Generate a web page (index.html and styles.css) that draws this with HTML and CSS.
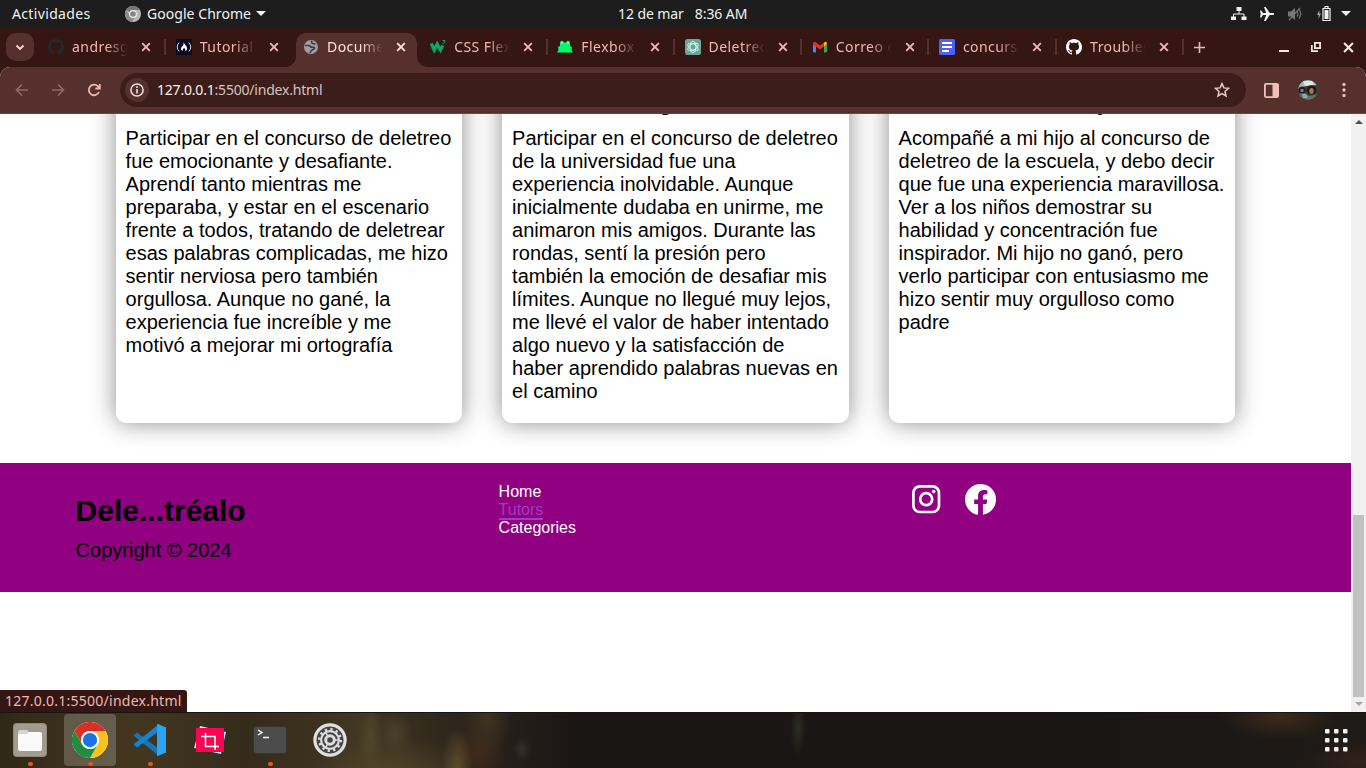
FILE: index.html
```html
<!DOCTYPE html>
<html lang="es">
<head>
<meta charset="utf-8">
<title>Document</title>
<link rel="stylesheet" href="styles.css">
</head>
<body>
<svg class="defs" width="0" height="0">
  <symbol id="x" viewBox="0 0 10 10"><path d="M1.200 1.200l7.600 7.600M8.800 1.200L1.200 8.800" stroke="currentColor" stroke-width="1.900" fill="none"/></symbol>
  <symbol id="gh" viewBox="0 0 16 16"><path fill="currentColor" d="M8 0C3.58 0 0 3.58 0 8c0 3.54 2.29 6.53 5.47 7.59.4.07.55-.17.55-.38 0-.19-.01-.82-.01-1.49-2.01.37-2.53-.49-2.69-.94-.09-.23-.48-.94-.82-1.13-.28-.15-.68-.52-.01-.53.63-.01 1.08.58 1.23.82.72 1.21 1.87.87 2.33.66.07-.52.28-.87.51-1.07-1.78-.2-3.64-.89-3.64-3.95 0-.87.31-1.59.82-2.15-.08-.2-.36-1.02.08-2.12 0 0 .67-.21 2.2.82.64-.18 1.32-.27 2-.27s1.36.09 2 .27c1.53-1.04 2.2-.82 2.2-.82.44 1.1.16 1.92.08 2.12.51.56.82 1.27.82 2.15 0 3.07-1.87 3.75-3.65 3.95.29.25.54.73.54 1.48 0 1.07-.01 1.93-.01 2.2 0 .21.15.46.55.38A8.01 8.01 0 0 0 16 8c0-4.42-3.58-8-8-8z"/></symbol>
</svg>

<header class="topbar">
  <span class="activities">Actividades</span>
  <span class="appmenu">
    <svg width="16" height="16" viewBox="0 0 16 16"><circle cx="8" cy="8" r="8" fill="#b9b9b9"/><path d="M8 8L1 4A8 8 0 0 1 15 4H8z" fill="#777"/><path d="M1 4A8 8 0 0 0 7 16L11 9.500L5 10z" fill="#8c8c8c"/><circle cx="8" cy="8" r="4" fill="#eee"/><circle cx="8" cy="8" r="2.800" fill="#858585"/></svg>
    <span class="appname">Google Chrome</span>
    <i class="caret"></i>
  </span>
  <span class="clock"><span>12 de mar</span><span>8:36 AM</span></span>
  <span class="tray">
    <svg width="16" height="14" viewBox="0 0 16 14"><path d="M5.500 0h5v4h-5zM0 9.500h5V13H0zM10.500 9.500h5V13h-5z" fill="#f2f2f2"/><path d="M8 4v3M2.500 10V7h10.500v3" stroke="#f2f2f2" fill="none"/></svg>
    <svg width="16" height="16" viewBox="0 0 16 16"><path d="M1 4.500h1.300L4 7h3.200L5 1h1.700l4 6h3c2 0 2 2 0 2h-3l-4 6H5l2.200-6H4l-1.700 2.500H1L1.700 8z" fill="#f2f2f2"/></svg>
    <svg width="16" height="16" viewBox="0 0 16 16"><path d="M1 5.500h3L8 2v12l-4-3.500H1z" fill="#777"/><path d="M10 5.500q2 2.500 0 5M12 3.500q3.500 4.500 0 9M2 14L13 2" stroke="#777" fill="none" stroke-width="1.200"/></svg>
    <svg width="16" height="16" viewBox="0 0 16 16"><path d="M3.500 4L1 9h1.800L2.500 13 5 7.500H3.200z" fill="#aaa"/><path d="M7 2.500h7v12H7zM9 .500h3v2H9z" fill="none" stroke="#f2f2f2" stroke-width="1.200"/><path d="M8.500 4h4v9h-4z" fill="#f2f2f2"/></svg>
    <i class="caret"></i>
  </span>
</header>

<nav class="tabs">
  <button class="search"><svg width="10" height="7" viewBox="0 0 10 7"><path d="M1.500 1.500L5 5l3.500-3.500" stroke="#ffdad5" stroke-width="1.800" fill="none"/></svg></button>
  <div class="tab sep"><svg class="fav dark" viewBox="0 0 16 16"><use href="#gh"/></svg><span class="name">andresg</span><svg class="close"><use href="#x"/></svg></div>
  <div class="tab"><svg class="fav" viewBox="0 0 16 16"><path fill="#0a0a23" d="M0 0h16v16H0z"/><path d="M3.200 3.500q-4 4.500 0 9M12.800 3.500q4 4.500 0 9" stroke="#ddd" fill="none"/><path d="M7.500 3c1 2.500 4 4.500 3.500 7-.3 1.500-1 2-1.700 2 .5-2-.5-2-1.300-3.500-.5 1.500-1.500 1.500-1.300 3.500C4.500 11 4.500 9 6 7.500 7 6.500 8 5 7.500 3z" fill="#fff"/></svg><span class="name">Tutorial</span><svg class="close"><use href="#x"/></svg></div>
  <div class="tab active"><svg class="fav" viewBox="0 0 16 16"><circle cx="8" cy="8" r="7" fill="#9aa0a6"/><path d="M8.800 1.800Q8 4 10 4.500l2.500.5M2 6.500h3.500q2.500 0 2.500 1.800H11q1.500 1-1 2.200Q8 11 7 14" stroke="#56302d" stroke-width="1.600" fill="none"/></svg><span class="name">Docume</span><svg class="close"><use href="#x"/></svg></div>
  <div class="tab sep"><svg class="fav" viewBox="0 0 16 16"><path d="M1.200 4.500L4.200 11l3-6 3.300 6 2.300-4.500" stroke="#04aa6d" stroke-width="3.200" fill="none"/><path d="M12.500 1.500H15l-1 1.300q2 1-1.500 2" stroke="#04aa6d" fill="none"/></svg><span class="name">CSS Flex</span><svg class="close"><use href="#x"/></svg></div>
  <div class="tab sep"><svg class="fav" viewBox="0 0 16 16"><path d="M3 4a2 2 0 0 1 4-.5h2a2 2 0 0 1 4 .5v3l2 1-.5 3 1.500 2.500H0L1.500 11 1 8l2-1z" fill="#00f86d"/><circle cx="5" cy="4" r=".8" fill="#fff"/><circle cx="11" cy="4" r=".8" fill="#fff"/></svg><span class="name">Flexbox</span><svg class="close"><use href="#x"/></svg></div>
  <div class="tab sep"><svg class="fav" viewBox="0 0 16 16"><rect width="16" height="16" rx="2.500" fill="#65a899"/><g fill="none" stroke="#e6f5f0" stroke-width=".9"><ellipse cx="8" cy="8" rx="3" ry="5.700"/><ellipse cx="8" cy="8" rx="3" ry="5.700" transform="rotate(60 8 8)"/><ellipse cx="8" cy="8" rx="3" ry="5.700" transform="rotate(120 8 8)"/></g></svg><span class="name">Deletreo</span><svg class="close"><use href="#x"/></svg></div>
  <div class="tab sep"><svg class="fav" viewBox="0 0 16 16"><path d="M1 5l3 2v6.500H2q-1 0-1-1z" fill="#4285f4"/><path d="M12 7l3-2v7.500q0 1-1 1h-2z" fill="#34a853"/><path d="M12 3.500q3-2 3 1.500l-3 2.500z" fill="#fbbc04"/><path d="M1 5q0-3.500 3-1.500l4 3 4-3V7.500l-4 3-4-3L1 5z" fill="#ea2b1f"/></svg><span class="name">Correo de</span><svg class="close"><use href="#x"/></svg></div>
  <div class="tab sep"><svg class="fav" viewBox="0 0 16 16"><rect width="16" height="16" rx="1.500" fill="#4e5ffb"/><path d="M3 4h10M3 8h10M3 12h7" stroke="#fff" stroke-width="2"/></svg><span class="name">concurso</span><svg class="close"><use href="#x"/></svg></div>
  <div class="tab sep"><svg class="fav light" viewBox="0 0 16 16"><use href="#gh"/></svg><span class="name">Troubles</span><svg class="close"><use href="#x"/></svg></div>
  <svg class="plus" width="11" height="11" viewBox="0 0 11 11"><path d="M5.500 0v11M0 5.500h11" stroke="#f0b8b2" stroke-width="1.600"/></svg>
  <span class="winctl">
    <svg width="10" height="12" viewBox="0 0 10 12"><path d="M0 10h10" stroke="#f4e9e8" stroke-width="2"/></svg>
    <svg width="10" height="10" viewBox="0 0 10 10"><path d="M3.900.900h5.200v5.200H3.900z M.8 3v6.200H7" stroke="#f4e9e8" stroke-width="1.800" fill="none"/></svg>
    <svg width="11" height="11" viewBox="0 0 10 10"><path d="M1 1l8 8M9 1L1 9" stroke="#f4e9e8" stroke-width="1.900"/></svg>
  </span>
</nav>

<div class="toolbar">
  <svg class="nav dim" viewBox="0 0 14 14"><path d="M13 7H2M7 1.500L1.500 7 7 12.500"/></svg>
  <svg class="nav dim" viewBox="0 0 14 14"><path d="M1 7h11M7 1.500L12.500 7 7 12.500"/></svg>
  <svg class="nav" viewBox="0 0 14 14"><path d="M12 9A5.300 5.300 0 1 1 11 3.300L12.500 5M12.800 1v4.500H8.300"/></svg>
  <div class="omnibox">
    <span class="info"><svg width="14" height="14" viewBox="0 0 14 14"><circle cx="7" cy="7" r="6.100" fill="none" stroke="#f1dfdc" stroke-width="1.500"/><path d="M7 3.300v1.600M7 6v4.500" stroke="#f1dfdc" stroke-width="1.600"/></svg></span>
    <span class="url"><b>127.0.0.1</b>:5500/index.html</span>
    <svg class="star" width="16" height="16" viewBox="0 0 16 16"><path d="M8 1.600l1.900 4.300 4.600.4-3.500 3.100 1 4.600L8 11.600 4 14l1-4.600L1.500 6.300l4.600-.4z" fill="none" stroke="#e8c9c5" stroke-width="1.500"/></svg>
  </div>
  <svg class="panel" width="15" height="15" viewBox="0 0 15 15"><rect x=".9" y=".9" width="13.200" height="13.200" rx="1.200" fill="none" stroke="#efbfb9" stroke-width="1.800"/><path d="M8.500 1H14v13H8.500z" fill="#efbfb9"/></svg>
  <svg class="avatar" width="20" height="20" viewBox="0 0 20 20"><clipPath id="av"><circle cx="10" cy="10" r="10"/></clipPath><g clip-path="url(#av)"><path d="M0 0h20v20H0z" fill="#39413f"/><path d="M0 0h20v5L8 6 0 9z" fill="#9db7c4"/><path d="M5 1h9l2 4-9 1z" fill="#e4e6d8"/><circle cx="4" cy="10" r="3.500" fill="#1e1c1e"/><circle cx="4" cy="10.500" r="1.700" fill="#9a7468"/><circle cx="13.500" cy="10" r="4.800" fill="#1f1a18"/><ellipse cx="13.500" cy="11" rx="2.200" ry="3" fill="#a87450"/><path d="M0 14l7-1 4 3 9-2v6H0z" fill="#5b7469"/><path d="M4 14h4l2 4H5z" fill="#93a8a6"/></g></svg>
  <svg width="4" height="16" viewBox="0 0 4 16"><g fill="#f0b8b2"><circle cx="2" cy="2.500" r="1.700"/><circle cx="2" cy="8" r="1.700"/><circle cx="2" cy="13.500" r="1.700"/></g></svg>
</div>

<div class="viewport">
  <main class="page">
    <section class="cards">
      <article class="card"><h3 class="title"></h3><p>Participar en el concurso de deletreo fue emocionante y desafiante. Aprendí tanto mientras me preparaba, y estar en el escenario frente a todos, tratando de deletrear esas palabras complicadas, me hizo sentir nerviosa pero también orgullosa. Aunque no gané, la experiencia fue increíble y me motivó a mejorar mi ortografía</p></article>
      <article class="card"><h3 class="title t2">g</h3><p>Participar en el concurso de deletreo de la universidad fue una experiencia inolvidable. Aunque inicialmente dudaba en unirme, me animaron mis amigos. Durante las rondas, sentí la presión pero también la emoción de desafiar mis límites. Aunque no llegué muy lejos, me llevé el valor de haber intentado algo nuevo y la satisfacción de haber aprendido palabras nuevas en el camino</p></article>
      <article class="card"><h3 class="title t3">j</h3><p>Acompañé a mi hijo al concurso de deletreo de la escuela, y debo decir que fue una experiencia maravillosa. Ver a los niños demostrar su habilidad y concentración fue inspirador. Mi hijo no ganó, pero verlo participar con entusiasmo me hizo sentir muy orgulloso como padre</p></article>
    </section>
    <footer class="footer">
      <div class="brand"><h2>Dele...tréalo</h2><p>Copyright © 2024</p></div>
      <ul class="links"><li>Home</li><li><a>Tutors</a></li><li>Categories</li></ul>
      <div class="social">
        <svg width="30" height="30" viewBox="0 0 30 30"><rect x="2.400" y="2.400" width="25.600" height="25.600" rx="6.500" fill="none" stroke="#fff" stroke-width="2.700"/><circle cx="15.200" cy="15.200" r="6" fill="none" stroke="#fff" stroke-width="2.700"/><circle cx="22.700" cy="7.600" r="1.800" fill="#fff"/></svg>
        <svg width="31" height="31" viewBox="0 0 24 24"><path fill="#fff" d="M24 12a12 12 0 1 0-13.880 11.850v-8.380H7.080V12h3.040V9.360c0-3.010 1.800-4.670 4.540-4.670 1.310 0 2.680.24 2.680.24v2.950h-1.510c-1.490 0-1.950.930-1.950 1.870V12h3.320l-.53 3.470h-2.790v8.380A12 12 0 0 0 24 12z"/></svg>
      </div>
    </footer>
  </main>
  <aside class="scroll"><i class="up"></i><i class="thumb"></i><i class="down"></i></aside>
  <div class="status">127.0.0.1:5500/index.html</div>
</div>

<footer class="dock">
  <div class="app run"><svg width="34" height="34" viewBox="0 0 34 34"><rect width="34" height="34" rx="4" fill="#8f897a"/><rect x="1" y="1" width="32" height="32" rx="3.500" fill="#a19c8d"/><path d="M5 9q0-2 2-2h7l2 2v4H5z" fill="#d8d4ca"/><path d="M5 12q0-1 1-1h8l2-2h11q2 0 2 2v15q0 2-2 2H7q-2 0-2-2z" fill="#fafafa"/></svg></div>
  <div class="app run on"><svg width="36" height="36" viewBox="0 0 48 48"><circle cx="24" cy="24" r="24" fill="#fff"/><path d="M3.200 12A24 24 0 0 1 44.800 12H24a12 12 0 0 0-10.400 18z" fill="#d93025"/><path d="M44.800 12A24 24 0 0 1 24 48L34.400 30A12 12 0 0 0 24 12z" fill="#fcc21b"/><path d="M3.200 12A24 24 0 0 0 24 48L34.400 30A12 12 0 0 1 13.600 30z" fill="#1e8e3e"/><circle cx="24" cy="24" r="12" fill="#fff"/><circle cx="24" cy="24" r="9.500" fill="#1a73e8"/></svg></div>
  <div class="app run"><svg width="32" height="32" viewBox="0 0 32 32"><path d="M0 11l3-2.500L25 25v7L0 12z" fill="#1475b8"/><path d="M0 21l3 2.500L25 7V0L0 20z" fill="#1683ce"/><path d="M24 0l8 3.500v25L24 32q-1 0-1-1V1q0-1 1-1z" fill="#2ba5f3"/></svg></div>
  <div class="app"><svg width="34" height="30" viewBox="0 0 34 30"><path d="M7 1l26 6-5 22L1 23z" fill="#cfe0ff"/><path d="M3 3h28v24H3z" fill="#fb0352"/><path d="M12.500 8v13.500H26M8 11.500h14V25" stroke="#fff" stroke-width="1.500" fill="none"/></svg></div>
  <div class="app run"><svg width="34" height="28" viewBox="0 0 34 28"><rect x=".5" y=".5" width="33" height="27" rx="3" fill="#4c4c4c" stroke="#353535"/><path d="M5 4l4 2.500L5 9M10 11.500h6" stroke="#fff" stroke-width="1.400" fill="none"/></svg></div>
  <div class="app"><svg width="34" height="34" viewBox="0 0 34 34"><circle cx="17" cy="17" r="16.700" fill="#e0e0e0"/><circle cx="17" cy="17" r="13.500" fill="#454545"/><circle cx="17" cy="17" r="10.800" fill="none" stroke="#ddd" stroke-width="2.400" stroke-dasharray="2.300 3.355"/><circle cx="17" cy="17" r="8.900" fill="none" stroke="#ddd" stroke-width="2.200"/><circle cx="17" cy="17" r="4.300" fill="none" stroke="#ddd" stroke-width="3"/><path d="M21 17h5M15.200 13.900l-2.700-4.700M15.200 20.100l-2.700 4.700" stroke="#ddd" stroke-width="1.500"/></svg></div>
  <svg class="grid" width="24" height="24" viewBox="0 0 24 24"><g fill="#f4f2f0"><rect x="1" y="1" width="4.500" height="4.500" rx="1"/><rect x="10" y="1" width="4.500" height="4.500" rx="1"/><rect x="19" y="1" width="4.500" height="4.500" rx="1"/><rect x="1" y="10" width="4.500" height="4.500" rx="1"/><rect x="10" y="10" width="4.500" height="4.500" rx="1"/><rect x="19" y="10" width="4.500" height="4.500" rx="1"/><rect x="1" y="19" width="4.500" height="4.500" rx="1"/><rect x="10" y="19" width="4.500" height="4.500" rx="1"/><rect x="19" y="19" width="4.500" height="4.500" rx="1"/></g></svg>
</footer>
</body>
</html>
```
FILE: styles.css
```css
* { box-sizing: border-box; margin: 0; padding: 0; }
body { width: 1366px; height: 768px; overflow: hidden; display: flex; flex-direction: column; font-family: "Noto Sans", sans-serif; background: #fff; }
svg { display: block; flex: none; }
.defs { display: none; }

.topbar { height: 27px; flex: none; background: #1d1d1d; color: #f2f2f2; font-size: 14px; line-height: 26px; display: flex; align-items: center; padding: 0 15px 0 12px; }
.activities { width: 113px; letter-spacing: .350px; }
.appmenu { display: flex; align-items: center; width: 493px; }
.appname { margin: 0 5px 0 6px; letter-spacing: .050px; }
.caret { border: 5px solid transparent; border-top-color: #f2f2f2; border-bottom: 0; }
.clock { display: flex; gap: 11px; letter-spacing: -.080px; white-space: nowrap; }
.tray { margin-left: auto; display: flex; align-items: center; gap: 12.300px; }
.tray .caret { margin-left: -3px; }

.tabs { height: 40px; flex: none; display: flex; align-items: center; background: #351613; padding-left: 6px; }
.search { width: 28px; height: 28px; border: 0; border-radius: 10px; background: #56302d; display: flex; align-items: center; justify-content: center; margin-right: 6px; }
.tab { width: 127.200px; height: 34px; margin-top: 6px; padding: 0 0 6px 8px; display: flex; align-items: center; color: #f0b8b2; position: relative; flex: none; }
.tab + .tab { padding-left: 8.600px; }
.fav { width: 16px; height: 16px; margin-right: 8px; }
.fav.dark { color: #24292f; }
.fav.light { color: #fff; }
.name { width: 57px; overflow: hidden; white-space: nowrap; font-size: 14px; line-height: 20px; letter-spacing: .450px; -webkit-mask-image: linear-gradient(90deg, #000 60%, transparent 98%); mask-image: linear-gradient(90deg, #000 60%, transparent 98%); }
.close { width: 10px; height: 10px; margin-left: 12px; }
.sep::after { content: ""; position: absolute; right: 1px; top: 6px; width: 2px; height: 16px; background: #56302d; }
.active { color: #ffe2de; }
.active::before { content: ""; position: absolute; z-index: 0; left: 1.500px; top: 0; width: 121px; height: 34px; background: #56302d; border-radius: 10px 10px 0 0; }
.active::after { content: ""; position: absolute; left: -8.500px; bottom: 0; width: 141px; height: 10px; background: radial-gradient(circle at 0 0, transparent 9.500px, #56302d 10px) 0 0 / 10px 10px no-repeat, radial-gradient(circle at 100% 0, transparent 9.500px, #56302d 10px) 100% 0 / 10px 10px no-repeat; }
.active > * { position: relative; z-index: 1; }
.plus { margin-left: 9px; }
.winctl { margin: 0 12px 0 auto; display: flex; align-items: center; gap: 22px; }

.toolbar { height: 47px; flex: none; background: linear-gradient(#56302d, #56302d) padding-box; border-bottom: 1px solid #684542; border-radius: 10px 10px 0 0; box-shadow: 0 -10px 0 #351613; display: flex; align-items: center; padding: 0 20px 0 15px; clip-path: inset(0); }
.nav { width: 14px; height: 14px; margin-right: 22px; fill: none; stroke: #f0b8b2; stroke-width: 1.800; }
.nav.dim { stroke: #916c69; stroke-width: 1.600; }
.omnibox { width: 1126px; height: 34px; margin-left: -3px; border-radius: 17px; background: #3c1d1a; display: flex; align-items: center; padding: 0 16px 0 5px; }
.info { width: 24px; height: 24px; border-radius: 50%; background: #56302d; display: flex; align-items: center; justify-content: center; }
.url { margin-left: 8px; font-size: 14px; line-height: 20px; color: #d8c2bf; letter-spacing: -.200px; }
.url b { font-weight: 400; color: #fff0ee; }
.star { margin-left: auto; }
.panel { margin-left: 18px; }
.avatar { margin: 0 24px 0 19px; }

.viewport { height: 598px; flex: none; display: flex; position: relative; overflow: hidden; background: #fff; font-family: "Liberation Sans", Arial, sans-serif; }
.page { width: 1351px; flex: none; }
.cards { display: grid; grid-template-columns: repeat(3, 346.500px); gap: 40px; margin: -30px 0 40px 115.600px; height: 339px; }
.card { background: #fff; border-radius: 10px; padding: 0 10px; box-shadow: 0 0 25px rgba(0, 0, 0, .45); font-size: 20px; line-height: 23px; }
.title { font-size: 23px; line-height: 27px; height: 43px; padding-top: 5px; }
.t2 { padding-left: 147px; }
.t3 { padding-left: 200px; }
.footer { height: 129px; background: #900080; display: grid; grid-template-columns: 423px 414px 1fr; padding: 20px 0 0 75.600px; position: relative; }
.brand h2 { font-size: 30px; line-height: 34px; margin-top: 11px; }
.brand p { font-size: 20px; line-height: 23px; margin-top: 11px; }
.links { list-style: none; color: #fff; font-size: 16px; line-height: 18px; }
.links li { height: 18px; }
.links a { color: #a03bc8; border-bottom: 2px solid #a03bc8; display: block; width: fit-content; height: 19px; }
.social { display: flex; gap: 24px; margin: 1px 0 0 -2px; }
.scroll { width: 15px; background: #f1f1f1; display: flex; flex-direction: column; align-items: center; }
.up { border: 4px solid transparent; border-bottom-color: #505050; border-top: 0; margin-top: 6px; }
.thumb { width: 11px; height: 182px; background: #c1c1c1; margin-top: 391px; }
.down { border: 4px solid transparent; border-top-color: #a3a3a3; border-bottom: 0; margin-top: 5px; }
.status { position: absolute; left: 0; bottom: 0; width: 187px; height: 22px; background: #351613; color: #f0b8b2; border-radius: 0 3px 0 0; padding-left: 5px; font: 14px/22px "Noto Sans", sans-serif; letter-spacing: .250px; }

.dock { height: 56px; flex: none; display: flex; align-items: center; padding-left: 4px; box-shadow: inset 0 1px #151515; background:
  radial-gradient(ellipse 14px 40px at 370px 25px, #51462c, transparent),
  radial-gradient(ellipse 18px 22px at 395px 22px, #4b4029, transparent),
  radial-gradient(ellipse 16px 40px at 457px 55px, #5c4c2e, transparent),
  radial-gradient(ellipse 24px 40px at 487px 5px, #40351f, transparent),
  radial-gradient(ellipse 30px 30px at 477px 42px, #3e2a1c, transparent),
  radial-gradient(ellipse 9px 12px at 522px 37px, #333126, transparent),
  radial-gradient(ellipse 80px 36px at 390px 60px, #52442a, transparent),
  radial-gradient(ellipse 8px 28px at 798px 16px, #2c2d24, transparent),
  radial-gradient(ellipse 60px 24px at 1280px 5px, #3c2a18, transparent),
  radial-gradient(ellipse 60px 24px at 1360px 50px, #33211a, transparent),
  linear-gradient(90deg, #302817, #443720 10%, #342b1b 18%, #403621 26%, #31291c 32%, #1a1615 42%, #191616 80%, #1e1a16); }
.app { width: 52px; height: 52px; margin-right: 8px; border-radius: 4px; display: flex; align-items: center; justify-content: center; position: relative; }
.on { background: rgba(255, 255, 255, .2); }
.run::after { content: ""; position: absolute; bottom: 0; left: 24px; width: 4.500px; height: 4.500px; border-radius: 50%; background: #e95420; }
.grid { margin: 0 18px 0 auto; }
```
